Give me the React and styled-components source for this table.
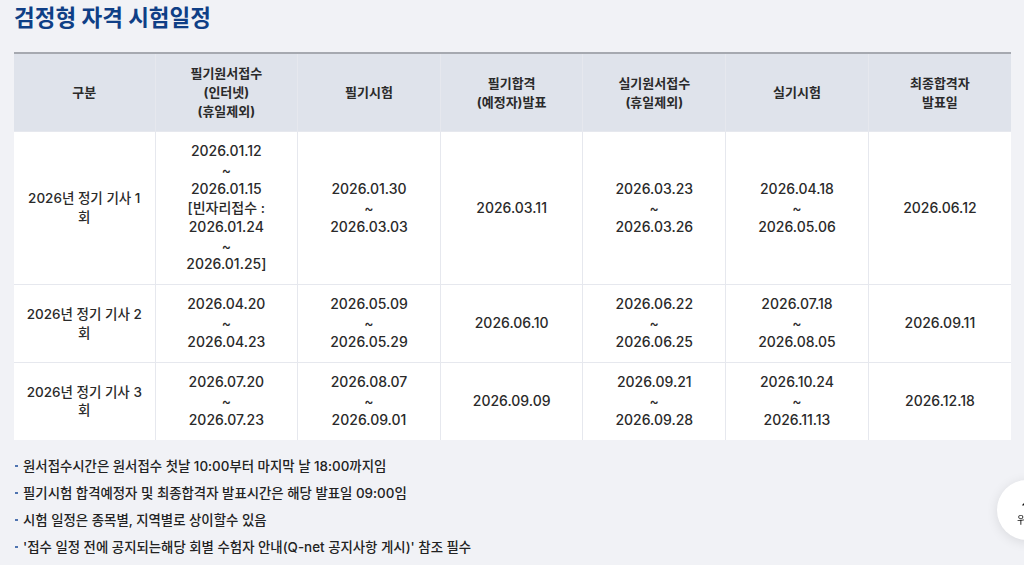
import styled, { createGlobalStyle } from "styled-components";
import { ChevronUp } from "lucide-react";

const GlobalStyle = createGlobalStyle`
  html, body {
    margin: 0;
    padding: 0;
    background: #f1f2f6;
    font-family: "Inter", "Noto Sans CJK KR", sans-serif;
    color: #222;
  }
`;

const headers = [
  ["구분"],
  ["필기원서접수", "(인터넷)", "(휴일제외)"],
  ["필기시험"],
  ["필기합격", "(예정자)발표"],
  ["실기원서접수", "(휴일제외)"],
  ["실기시험"],
  ["최종합격자", "발표일"],
];

const rows = [
  [
    ["2026년 정기 기사 1", "회"],
    ["2026.01.12", "~", "2026.01.15", "[빈자리접수 :", "2026.01.24", "~", "2026.01.25]"],
    ["2026.01.30", "~", "2026.03.03"],
    ["2026.03.11"],
    ["2026.03.23", "~", "2026.03.26"],
    ["2026.04.18", "~", "2026.05.06"],
    ["2026.06.12"],
  ],
  [
    ["2026년 정기 기사 2", "회"],
    ["2026.04.20", "~", "2026.04.23"],
    ["2026.05.09", "~", "2026.05.29"],
    ["2026.06.10"],
    ["2026.06.22", "~", "2026.06.25"],
    ["2026.07.18", "~", "2026.08.05"],
    ["2026.09.11"],
  ],
  [
    ["2026년 정기 기사 3", "회"],
    ["2026.07.20", "~", "2026.07.23"],
    ["2026.08.07", "~", "2026.09.01"],
    ["2026.09.09"],
    ["2026.09.21", "~", "2026.09.28"],
    ["2026.10.24", "~", "2026.11.13"],
    ["2026.12.18"],
  ],
];

const notes = [
  "원서접수시간은 원서접수 첫날 10:00부터 마지막 날 18:00까지임",
  "필기시험 합격예정자 및 최종합격자 발표시간은 해당 발표일 09:00임",
  "시험 일정은 종목별, 지역별로 상이할수 있음",
  "'접수 일정 전에 공지되는해당 회별 수험자 안내(Q-net 공지사항 게시)' 참조 필수",
];

const Lines = ({ lines }) =>
  lines.map((l, i) => (
    <span key={i}>
      {l}
      {i < lines.length - 1 && <br />}
    </span>
  ));

export default function App() {
  return (
    <Page>
      <GlobalStyle />
      <Title>검정형 자격 시험일정</Title>
      <Table>
        <colgroup>
          <col style={{ width: 141 }} />
          {headers.slice(1).map((_, i) => (
            <col key={i} />
          ))}
        </colgroup>
        <thead>
          <tr>
            {headers.map((h, i) => (
              <Th key={i}>
                <Lines lines={h} />
              </Th>
            ))}
          </tr>
        </thead>
        <tbody>
          {rows.map((r, ri) => (
            <tr key={ri}>
              {r.map((c, ci) => (
                <Td key={ci}>
                  <Lines lines={c} />
                </Td>
              ))}
            </tr>
          ))}
        </tbody>
      </Table>
      <Notes>
        {notes.map((n) => (
          <Note key={n}>{n}</Note>
        ))}
      </Notes>
      <TopButton>
        <ChevronUp size={16} strokeWidth={2} />
        <span>위로</span>
      </TopButton>
    </Page>
  );
}

const Page = styled.div`
  padding: 4px 13px 0 14px;
`;

const Title = styled.h2`
  margin: 0 0 20px;
  font-size: 22.5px;
  line-height: 28px;
  font-weight: 700;
  color: #0f3f86;
`;

const Table = styled.table`
  width: 997px;
  border-collapse: collapse;
  table-layout: fixed;
  border-top: 2px solid #a6a9b0;
  background: #fff;
`;

const Th = styled.th`
  background: #dfe3eb;
  font-size: 13px;
  font-weight: 700;
  line-height: 19px;
  color: #2a2a2a;
  padding: 10px 4px;
  border-left: 1px solid #e6e8ee;
  &:first-child {
    border-left: none;
  }
`;

const Td = styled.td`
  font-size: 14px;
  font-weight: 500;
  line-height: 18.9px;
  color: #2a2a2a;
  text-align: center;
  vertical-align: middle;
  padding: 10px 4px;
  border-left: 1px solid #e6e8ee;
  border-top: 1px solid #e6e8ee;
  &:first-child {
    border-left: none;
    font-size: 13.5px;
  }
`;

const Notes = styled.ul`
  list-style: none;
  margin: 0;
  padding: 13px 0 0;
`;

const Note = styled.li`
  position: relative;
  padding-left: 9px;
  font-size: 13.4px;
  font-weight: 500;
  line-height: 27px;
  color: #222;
  &::before {
    content: "";
    position: absolute;
    left: 1px;
    top: 12px;
    width: 2.5px;
    height: 2.5px;
    background: #4f74b0;
  }
`;

const TopButton = styled.button`
  position: fixed;
  left: 997px;
  top: 480px;
  width: 60px;
  height: 60px;
  border-radius: 50%;
  border: none;
  background: #fff;
  box-shadow: 0 2px 12px rgba(0, 0, 0, 0.1);
  display: flex;
  flex-direction: column;
  align-items: center;
  justify-content: center;
  gap: 2px;
  padding: 0;
  color: #111;
  font-family: "Noto Sans CJK KR", sans-serif;
  font-size: 11px;
  line-height: 12px;
`;
